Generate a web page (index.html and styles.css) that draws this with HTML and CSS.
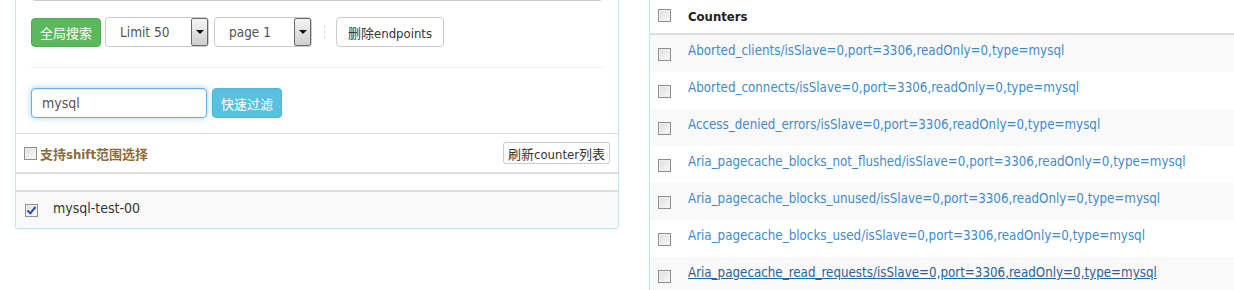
FILE: index.html
```html
<!DOCTYPE html>
<html>
<head>
  <meta charset="UTF-8">
  <title>Dashboard</title>
  <link rel="stylesheet" href="styles.css">
</head>
<body>
  <div class="row">
    <div class="col">
      <div class="panel panel-left">
        <div class="panel-body">
          <input type="text" class="form-control top-input">

          <div class="toolbar">
            <button class="btn btn-success">全局搜索</button>
            <div class="fake-select">
              <span class="value">Limit 50</span>
              <span class="arrow"></span>
            </div>
            <div class="fake-select">
              <span class="value">page 1</span>
              <span class="arrow"></span>
            </div>
            <span class="sep"></span>
            <button class="btn btn-default">删除endpoints</button>
          </div>

          <hr>

          <div class="filter">
            <input type="text" class="form-control filter-input" value="mysql">
            <button class="btn btn-info">快速过滤</button>
          </div>
        </div>

        <div class="panel-footer">
          <label class="shift-label"><input type="checkbox" class="cb"> 支持shift范围选择</label>
          <button class="btn btn-xs">刷新counter列表</button>
        </div>

        <table class="table endpoints">
          <thead>
            <tr><th></th></tr>
          </thead>
          <tbody>
            <tr class="striped">
              <td><input type="checkbox" class="cb" checked> <span class="ep">mysql-test-00</span></td>
            </tr>
          </tbody>
        </table>
      </div>
    </div>

    <div class="col">
      <div class="panel panel-right">
        <table class="table counters">
          <thead>
            <tr>
              <th class="cb-cell"><input type="checkbox" class="cb head-cb"></th>
              <th>Counters</th>
            </tr>
          </thead>
          <tbody id="counterRows"></tbody>
        </table>
      </div>
    </div>
  </div>

  <script>
    var counters = [
      "Aborted_clients",
      "Aborted_connects",
      "Access_denied_errors",
      "Aria_pagecache_blocks_not_flushed",
      "Aria_pagecache_blocks_unused",
      "Aria_pagecache_blocks_used",
      "Aria_pagecache_read_requests"
    ];
    var tags = "/isSlave=0,port=3306,readOnly=0,type=mysql";
    var tbody = document.getElementById('counterRows');

    counters.forEach(function (name, i) {
      var tr = document.createElement('tr');
      if (i % 2 === 0) tr.className = 'striped';
      var hover = (i === counters.length - 1) ? ' class="hover"' : '';
      tr.innerHTML = '<td class="cb-cell"><input type="checkbox" class="cb"></td>' +
        '<td><a href="#"' + hover + '>' + name + tags + '</a></td>';
      tbody.appendChild(tr);
    });
  </script>
</body>
</html>
```

FILE: styles.css
```css
/* page layout */
body {
  margin: 0;
  font-family: "DejaVu Sans Condensed", "DejaVu Sans", "Noto Sans CJK SC", sans-serif;
  font-size: 13px;
  color: #333;
  background: #fff;
  overflow: hidden;
}

.row {
  display: flex;
}

.col {
  flex: none;
  width: 634px;
  padding: 0 15px;
  box-sizing: border-box;
}

.panel {
  border: 1px solid #bce8f1;
  border-top: none;
  background: #fff;
}

.panel-left {
  border-radius: 0 0 4px 4px;
  box-shadow: 0 1px 1px rgba(0, 0, 0, 0.05);
}

.panel-right {
  border-right: none;
  min-height: 300px;
}

.panel-body {
  padding: 0 15px 15px;
}

/* inputs */
.form-control {
  box-sizing: border-box;
  height: 30px;
  padding: 4px 10px;
  font-family: inherit;
  font-size: 14px;
  color: #555;
  border: 1px solid #ccc;
  border-radius: 4px;
  background: #fff;
  outline: none;
}

.top-input {
  display: block;
  width: 100%;
  margin-top: -29px;
  margin-bottom: 16px;
  box-shadow: inset 0 1px 1px rgba(0, 0, 0, 0.075);
}

/* buttons */
.btn {
  box-sizing: border-box;
  height: 30px;
  padding: 0 11px;
  font-family: inherit;
  font-size: 13px;
  border: 1px solid #ccc;
  border-radius: 4px;
  background: #fff;
  color: #333;
  cursor: pointer;
}

.btn-success {
  background: #5cb85c;
  border-color: #4cae4c;
  color: #fff;
  width: 70px;
  height: 29px;
  padding: 0;
}

.btn-info {
  background: #5bc0de;
  border-color: #46b8da;
  color: #fff;
  width: 70px;
  padding: 0;
}

.btn-default {
  width: 108px;
  padding: 0;
}

.btn-xs {
  height: 22px;
  padding: 0 4px;
  font-size: 13px;
  border-radius: 3px;
}

/* toolbar */
.toolbar {
  display: flex;
  align-items: center;
  height: 30px;
}

.fake-select {
  box-sizing: border-box;
  display: flex;
  align-items: stretch;
  height: 30px;
  width: 104px;
  margin-left: 4px;
  border: 1px solid #ccc;
  border-radius: 4px;
  background: #fff;
}

.fake-select + .fake-select {
  width: 98px;
  margin-left: 5px;
}

.fake-select .value {
  flex: 1;
  padding-left: 14px;
  line-height: 28px;
  font-size: 13.5px;
  color: #555;
}

.fake-select .arrow {
  position: relative;
  width: 15px;
  border: 1px solid #6a6a6a;
  border-radius: 2px;
  background: linear-gradient(#f4f4f4, #cfcfcf);
}

.fake-select .arrow::after {
  content: "";
  position: absolute;
  left: 4px;
  top: 11px;
  border-left: 4px solid transparent;
  border-right: 4px solid transparent;
  border-top: 4px solid #111;
}

.sep {
  width: 0;
  height: 14px;
  margin: 0 11px 0 12px;
  border-left: 1px dashed #ddd;
}

hr {
  margin: 20px 0;
  border: 0;
  border-top: 1px solid #eee;
}

.filter {
  display: flex;
  gap: 5px;
}

.filter-input {
  width: 176px;
  border-color: #66afe9;
  box-shadow: inset 0 1px 1px rgba(0, 0, 0, 0.075), 0 0 6px rgba(102, 175, 233, 0.6);
}

/* footer with shift option */
.panel-footer {
  display: flex;
  align-items: center;
  justify-content: space-between;
  height: 38px;
  padding: 0 8px 0 8px;
  border-top: 1px solid #ddd;
}

.shift-label {
  display: flex;
  align-items: center;
  gap: 3px;
  font-weight: bold;
  color: #8a6d3b;
}

/* checkboxes */
.cb {
  appearance: none;
  -webkit-appearance: none;
  box-sizing: border-box;
  width: 13px;
  height: 13px;
  margin: 0;
  border: 1px solid #8f8f8f;
  background: linear-gradient(135deg, #dcdcdc, #fbfbfb);
  box-shadow: inset 0 0 0 1px #f0f0f0;
  vertical-align: middle;
  position: relative;
}

.cb:checked::after {
  content: "";
  position: absolute;
  left: 3px;
  top: 0;
  width: 3px;
  height: 7px;
  border: solid #2a4fa8;
  border-width: 0 2px 2px 0;
  transform: rotate(40deg);
}

/* tables */
.table {
  width: 100%;
  border-collapse: collapse;
}

.endpoints thead th {
  height: 16px;
  padding: 0;
  border-top: 2px solid #ddd;
  border-bottom: 2px solid #ddd;
}

.endpoints td {
  height: 33px;
  padding: 0 9px 3px;
  font-size: 14px;
}

.endpoints .ep {
  margin-left: 11px;
}

.endpoints .cb {
  margin-top: 4px;
}

.striped {
  background: #f9f9f9;
}

.counters th {
  height: 33px;
  padding: 0;
  text-align: left;
  font-weight: bold;
  color: #222;
  border-bottom: 2px solid #ddd;
}

.counters td {
  height: 37px;
  padding: 0;
  vertical-align: top;
}

.counters td a {
  display: inline-block;
  margin-top: 7px;
  line-height: 18px;
  font-size: 13.25px;
}

.counters .cb-cell {
  width: 30px;
  padding-left: 8px;
}

.counters td.cb-cell .cb {
  margin-top: 13px;
}

.counters .head-cb {
  margin-top: -4px;
}

.counters a {
  color: #428bca;
  text-decoration: none;
}

.counters a.hover {
  color: #2a6496;
  text-decoration: underline;
}
```
